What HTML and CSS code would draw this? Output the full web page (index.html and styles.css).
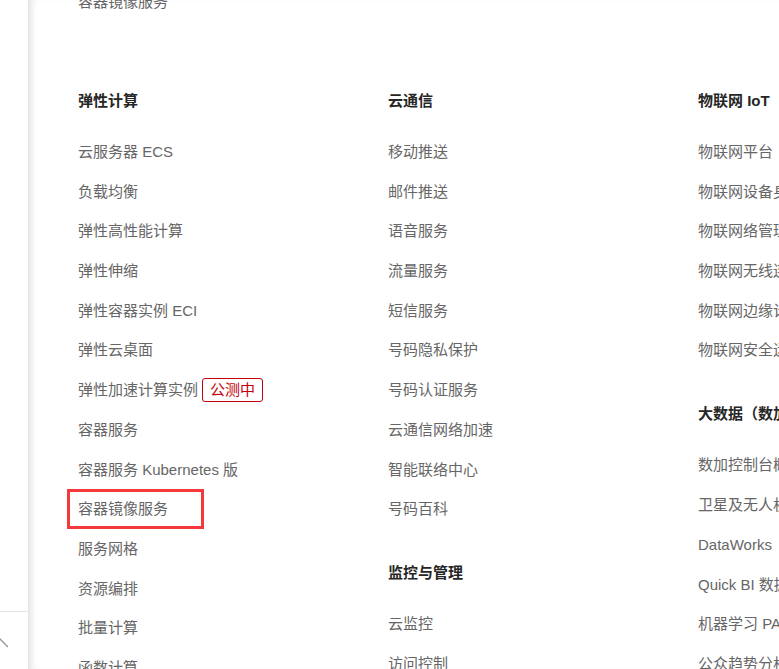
FILE: index.html
```html
<!DOCTYPE html>
<html lang="zh-CN">
<head>
<meta charset="utf-8">
<title>产品</title>
<link rel="stylesheet" href="styles.css">
</head>
<body>
<div class="page">
  <aside class="sidebar">
    <div class="side-top"></div>
    <div class="side-bottom">
      <svg class="chev" width="16" height="10" viewBox="0 0 16 10"><path d="M0 9 L8 1 L16 9" fill="none" stroke="#9a9a9a" stroke-width="1.4"/></svg>
    </div>
  </aside>
  <main class="main">
    <div class="columns">
      <div class="col">
        <div class="prev">容器镜像服务</div>
        <section class="sec">
          <h3 class="head">弹性计算</h3>
          <ul class="list">
            <li class="item">云服务器 ECS</li>
            <li class="item">负载均衡</li>
            <li class="item">弹性高性能计算</li>
            <li class="item">弹性伸缩</li>
            <li class="item">弹性容器实例 ECI</li>
            <li class="item">弹性云桌面</li>
            <li class="item">弹性加速计算实例<span class="badge">公测中</span></li>
            <li class="item">容器服务</li>
            <li class="item">容器服务 Kubernetes 版</li>
            <li class="item marked">容器镜像服务</li>
            <li class="item">服务网格</li>
            <li class="item">资源编排</li>
            <li class="item">批量计算</li>
            <li class="item">函数计算</li>
          </ul>
        </section>
      </div>
      <div class="col">
        <div class="prev"></div>
        <section class="sec">
          <h3 class="head">云通信</h3>
          <ul class="list">
            <li class="item">移动推送</li>
            <li class="item">邮件推送</li>
            <li class="item">语音服务</li>
            <li class="item">流量服务</li>
            <li class="item">短信服务</li>
            <li class="item">号码隐私保护</li>
            <li class="item">号码认证服务</li>
            <li class="item">云通信网络加速</li>
            <li class="item">智能联络中心</li>
            <li class="item">号码百科</li>
          </ul>
        </section>
        <section class="sec">
          <h3 class="head">监控与管理</h3>
          <ul class="list">
            <li class="item">云监控</li>
            <li class="item">访问控制</li>
          </ul>
        </section>
      </div>
      <div class="col">
        <div class="prev"></div>
        <section class="sec">
          <h3 class="head">物联网 IoT</h3>
          <ul class="list">
            <li class="item">物联网平台</li>
            <li class="item">物联网设备身份认证</li>
            <li class="item">物联网络管理平台</li>
            <li class="item">物联网无线连接服务</li>
            <li class="item">物联网边缘计算</li>
            <li class="item">物联网安全运营中心</li>
          </ul>
        </section>
        <section class="sec">
          <h3 class="head">大数据（数加）</h3>
          <ul class="list">
            <li class="item">数加控制台概览</li>
            <li class="item">卫星及无人机遥感</li>
            <li class="item">DataWorks</li>
            <li class="item">Quick BI 数据可视化分析</li>
            <li class="item">机器学习 PAI</li>
            <li class="item">公众趋势分析</li>
          </ul>
        </section>
      </div>
    </div>
  </main>
</div>
</body>
</html>
```

FILE: styles.css
```css
html, body {
  margin: 0;
  padding: 0;
  height: 100%;
  overflow: hidden;
  background: #fff;
}
body {
  font-family: "Liberation Sans", "Noto Sans CJK SC", sans-serif;
  font-size: 15px;
}
.page {
  display: flex;
  height: 669px;
  width: 779px;
  overflow: hidden;
}
.sidebar {
  width: 28px;
  flex: none;
  display: flex;
  flex-direction: column;
  background: #fff;
}
.side-top {
  height: 611px;
  border-bottom: 1px solid #e2e2e2;
}
.side-bottom {
  padding-top: 26px;
}
.chev {
  display: block;
  margin-left: -8px;
}
.main {
  flex: 1;
  min-width: 0;
  padding-left: 50px;
  box-shadow: inset 8px 0 8px -6px #d9d9d9;
  overflow: hidden;
}
.columns {
  display: flex;
  margin-top: -8px;
}
.col {
  width: 310px;
  flex: none;
  display: flex;
  flex-direction: column;
  gap: 44px;
}
.prev {
  height: 20px;
  line-height: 20px;
  color: #666;
  margin-bottom: 35px;
  white-space: nowrap;
}
.head {
  margin: 0 0 31px;
  height: 20px;
  line-height: 20px;
  font-size: 15px;
  font-weight: bold;
  color: #262626;
  white-space: nowrap;
}
.list {
  list-style: none;
  margin: 0;
  padding: 0;
  display: flex;
  flex-direction: column;
  gap: 19.7px;
}
.item {
  height: 20px;
  line-height: 20px;
  color: #666;
  white-space: nowrap;
  display: flex;
  align-items: center;
}
.badge {
  margin-left: 4px;
  height: 22px;
  line-height: 22px;
  padding: 0 7px;
  border: 1px solid #c4000a;
  border-radius: 3px;
  color: #c4000a;
}
.marked {
  position: relative;
}
.marked::after {
  content: "";
  position: absolute;
  left: -11px;
  top: -10px;
  width: 131px;
  height: 34px;
  border: 3px solid #f5383b;
}
```
